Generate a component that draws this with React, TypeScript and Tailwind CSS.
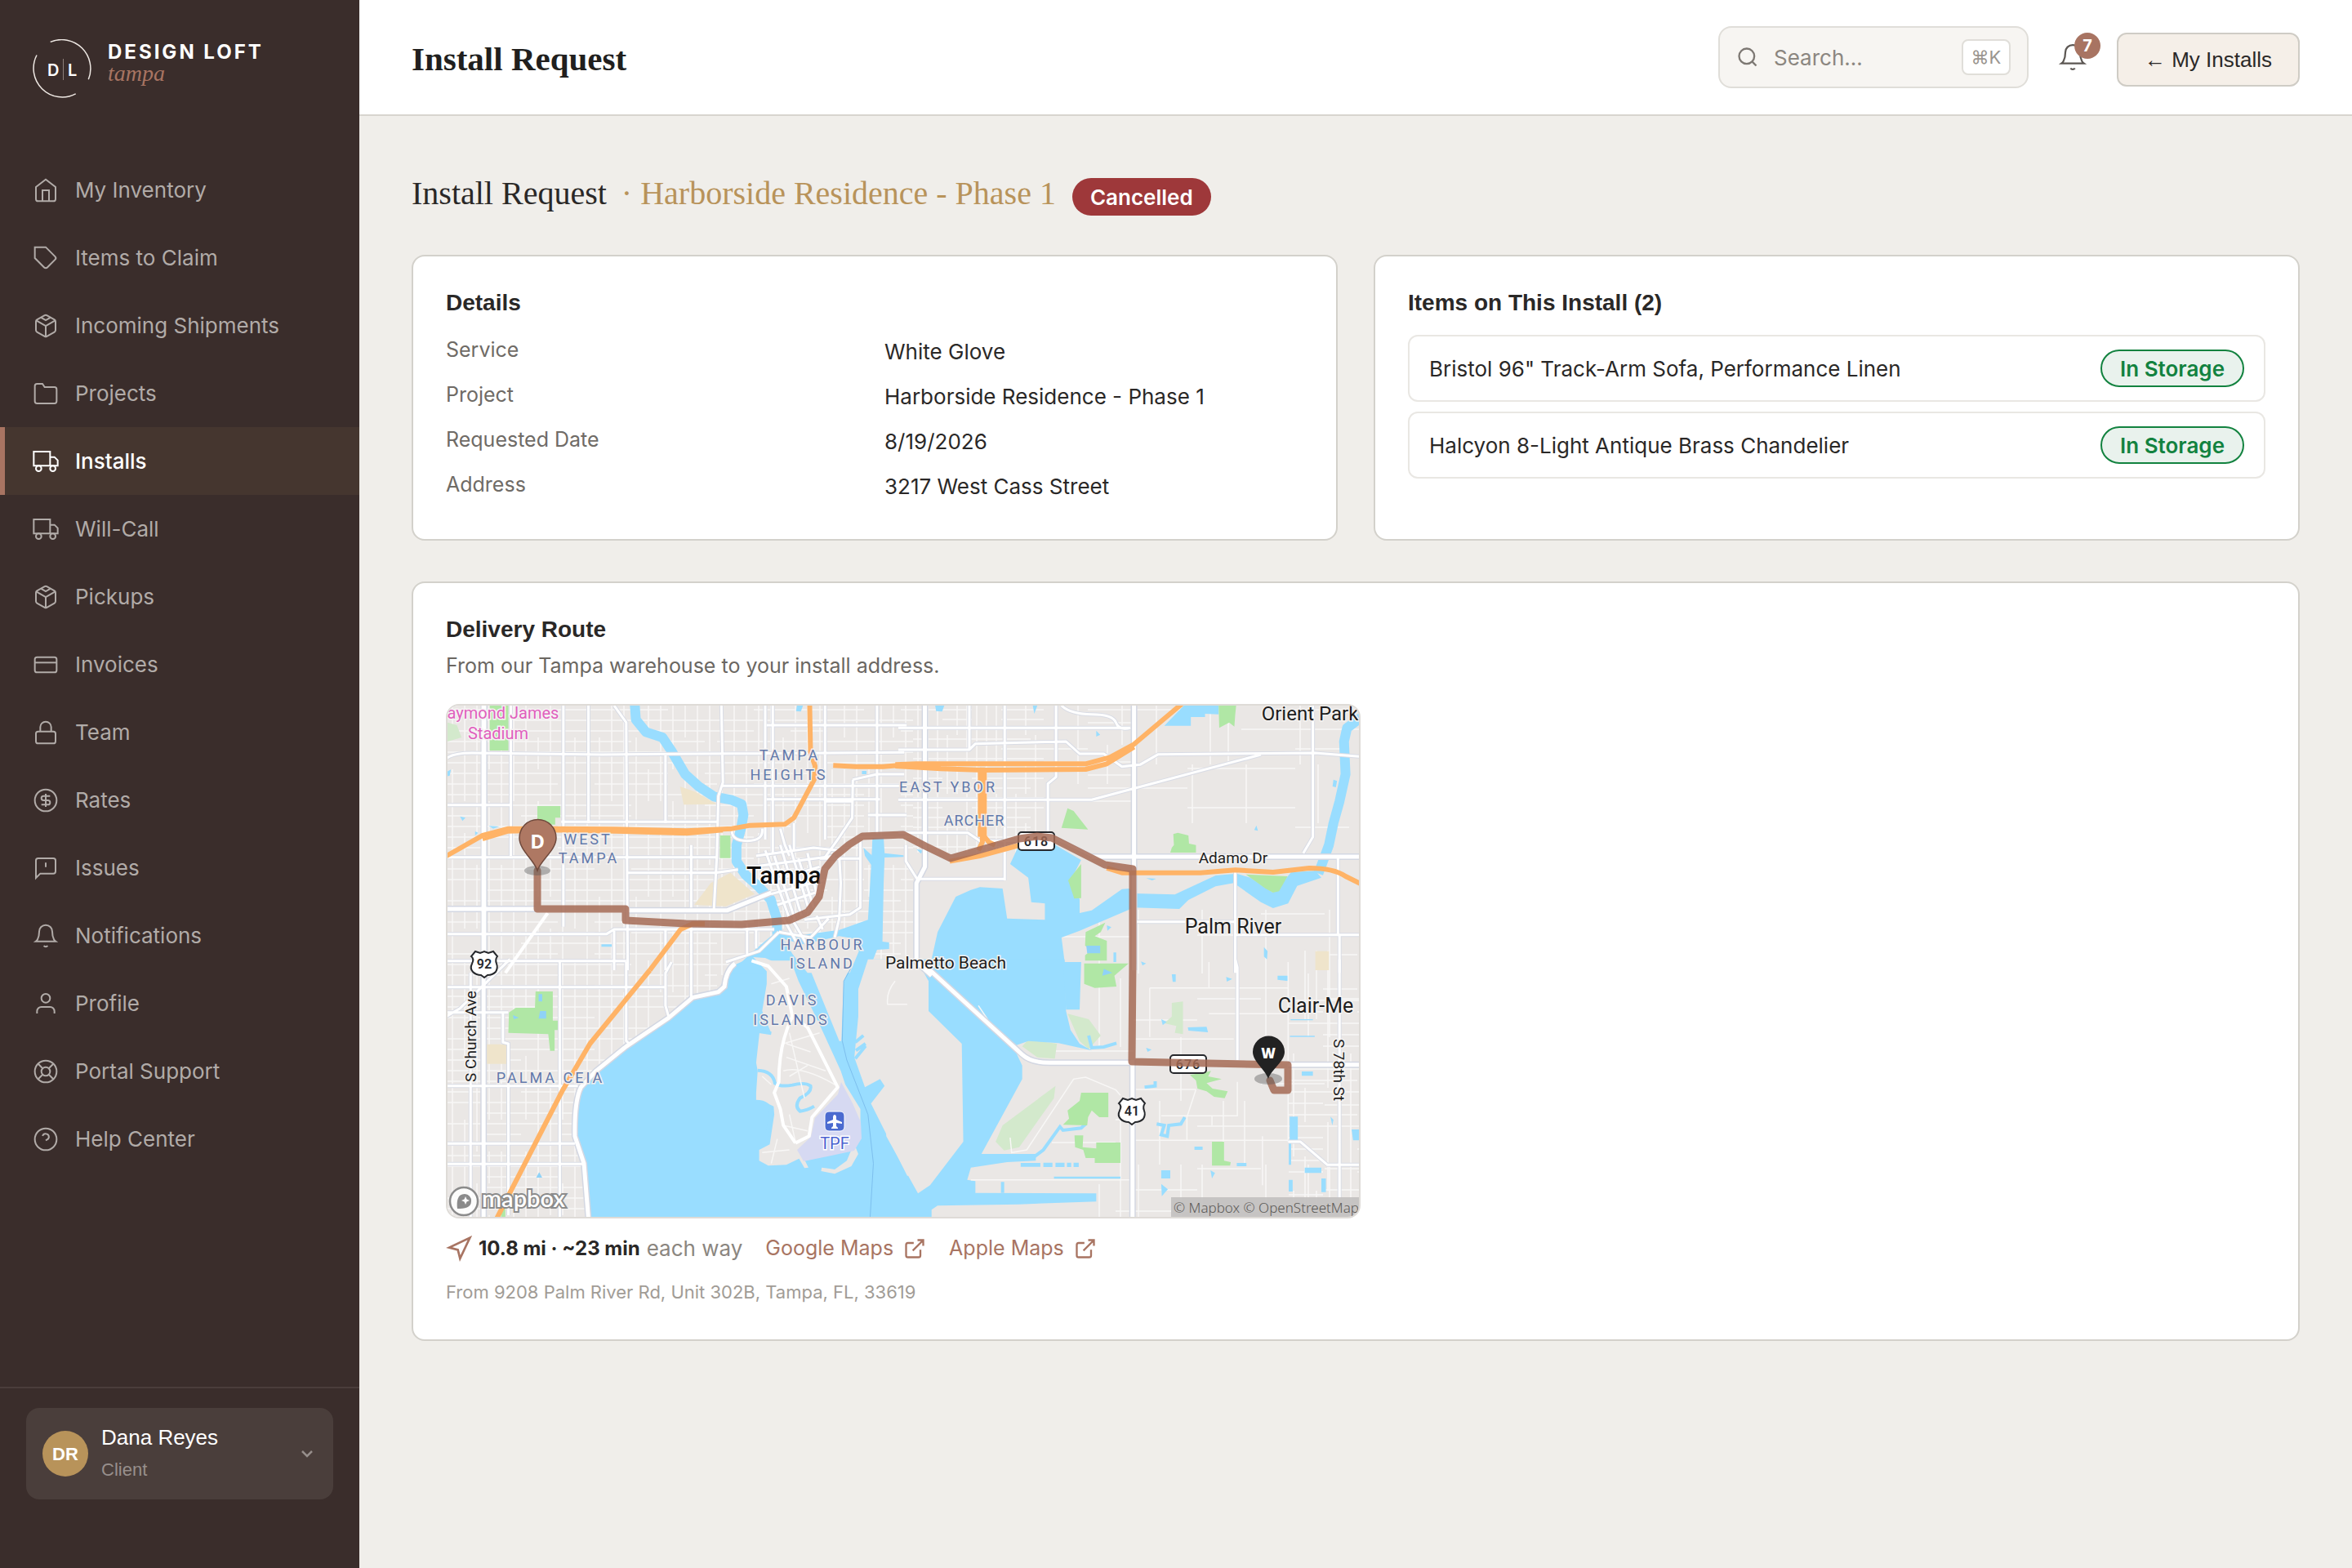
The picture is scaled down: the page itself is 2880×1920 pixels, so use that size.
import React from "react";

type IconProps = { className?: string; children: React.ReactNode };

function Icon({ className = "size-8", children }: IconProps) {
  return (
    <svg viewBox="0 0 24 24" fill="none" stroke="currentColor" strokeWidth="1.5" className={className} aria-hidden="true">
      {children}
    </svg>
  );
}

const box = (
  <>
    <path d="M21 16V8a2 2 0 0 0-1-1.73l-7-4a2 2 0 0 0-2 0l-7 4A2 2 0 0 0 3 8v8a2 2 0 0 0 1 1.73l7 4a2 2 0 0 0 2 0l7-4A2 2 0 0 0 21 16z" />
    <path d="M7.5 4.21 12 6.81l4.5-2.6M3.27 6.96 12 12.01l8.73-5.05M12 22.08V12" />
  </>
);
const truck = (
  <>
    <path d="M1 3h15v13H1zM16 8h4l3 3v5h-7z" />
    <circle cx="5.5" cy="18.5" r="2.5" />
    <circle cx="18.5" cy="18.5" r="2.5" />
  </>
);
const bell = <path d="M18 8A6 6 0 0 0 6 8c0 7-3 9-3 9h18s-3-2-3-9M13.73 21a2 2 0 0 1-3.46 0" />;

const nav: { label: string; icon: React.ReactNode; active?: boolean }[] = [
  { label: "My Inventory", icon: <path d="M3 9l9-7 9 7v11a2 2 0 0 1-2 2H5a2 2 0 0 1-2-2zM9 22V12h6v10" /> },
  { label: "Items to Claim", icon: <path d="M20.59 13.41l-7.17 7.17a2 2 0 0 1-2.83 0L2 12V2h10l8.59 8.59a2 2 0 0 1 0 2.82z" /> },
  { label: "Incoming Shipments", icon: box },
  { label: "Projects", icon: <path d="M22 19a2 2 0 0 1-2 2H4a2 2 0 0 1-2-2V5a2 2 0 0 1 2-2h5l2 3h9a2 2 0 0 1 2 2z" /> },
  { label: "Installs", icon: truck, active: true },
  { label: "Will-Call", icon: truck },
  { label: "Pickups", icon: box },
  { label: "Invoices", icon: <><rect x="2" y="5" width="20" height="14" rx="2" /><path d="M2 10h20" /></> },
  { label: "Team", icon: <><rect x="3" y="11" width="18" height="11" rx="2" /><path d="M7 11V7a5 5 0 0 1 10 0v4" /></> },
  { label: "Rates", icon: <><circle cx="12" cy="12" r="10" /><path d="M16 8h-6a2 2 0 1 0 0 4h4a2 2 0 1 1 0 4H8M12 18V6" /></> },
  { label: "Issues", icon: <path d="M21 15a2 2 0 0 1-2 2H7l-4 4V5a2 2 0 0 1 2-2h14a2 2 0 0 1 2 2zM12 7v4" /> },
  { label: "Notifications", icon: bell },
  { label: "Profile", icon: <><path d="M20 21v-2a4 4 0 0 0-4-4H8a4 4 0 0 0-4 4v2" /><circle cx="12" cy="7" r="4" /></> },
  {
    label: "Portal Support",
    icon: (
      <>
        <circle cx="12" cy="12" r="10" />
        <circle cx="12" cy="12" r="4" />
        <path d="M4.93 4.93l4.24 4.24M14.83 14.83l4.24 4.24M14.83 9.17l4.24-4.24M4.93 19.07l4.24-4.24" />
      </>
    ),
  },
  { label: "Help Center", icon: <><circle cx="12" cy="12" r="10" /><path d="M9.09 9a3 3 0 0 1 5.83 1c0 2-3 3-3 3" /></> },
];

function Sidebar() {
  return (
    <aside className="flex w-[440px] shrink-0 flex-col bg-[#3a2d2b]">
      <div className="flex gap-5 px-10 pt-12">
        <svg viewBox="0 0 72 72" fill="none" className="size-[72px]" role="img" aria-label="DL">
          <path d="M21.7 3.4A35.4 35.4 0 0 1 68.3 49.3M52.7 66.8A35.2 35.2 0 0 1 5 19.5" stroke="#efe9e4" strokeWidth="1.5" />
          <path d="M37.5 24v26" stroke="#8d7f7a" strokeWidth="1" />
          <text x="18" y="45" fontSize="20" fontWeight="600" fill="#fff" fontFamily="Inter, sans-serif">D</text>
          <text x="43" y="45" fontSize="20" fontWeight="600" fill="#fff" fontFamily="Inter, sans-serif">L</text>
        </svg>
        <div className="flex flex-col">
          <span className="text-2xl font-bold tracking-[3px] text-white">DESIGN LOFT</span>
          <span className="font-['Liberation_Serif',serif] text-[28px] leading-5 text-[#a87462] italic">tampa</span>
        </div>
      </div>
      <nav className="mt-[71px] flex flex-col">
        {nav.map((n) => (
          <a
            key={n.label}
            href="#"
            aria-current={n.active ? "page" : undefined}
            className={
              n.active
                ? "flex h-[83px] items-center gap-5 border-l-6 border-[#a87462] bg-[#45362f] pl-[34px] text-[26px] font-medium text-white"
                : "flex h-[83px] items-center gap-5 border-l-6 border-transparent pl-[34px] text-[26px] text-[#b1aba8]"
            }
          >
            <Icon>{n.icon}</Icon>
            {n.label}
          </a>
        ))}
      </nav>
      <div className="mt-auto border-t-2 border-[#4a3d3b] px-8 pt-6 pb-[84px] font-['Liberation_Sans',sans-serif]">
        <button className="flex h-28 w-full items-center gap-4 rounded-2xl bg-[#4a3e3b] px-5 text-left">
          <span className="flex size-14 items-center justify-center rounded-full bg-[#b8935a] text-[22px] font-bold text-white">DR</span>
          <span className="flex flex-1 flex-col gap-1">
            <span className="text-[26px] leading-9 text-white">Dana Reyes</span>
            <span className="text-[22px] leading-9 text-[#978f8c]">Client</span>
          </span>
          <svg viewBox="0 0 24 24" fill="none" stroke="#978f8c" strokeWidth="2.5" className="size-6" aria-hidden="true">
            <path d="m6 9 6 6 6-6" />
          </svg>
        </button>
      </div>
    </aside>
  );
}

function Header() {
  return (
    <header className="flex h-[142px] items-center gap-8 border-b-2 border-[#d8d5cf] bg-white px-16">
      <h1 className="flex-1 pt-1 font-['Liberation_Serif',serif] text-[41px] leading-[50px] font-bold text-[#211f1e]">Install Request</h1>
      <label className="flex h-[76px] w-[380px] items-center gap-[18px] rounded-2xl border-2 border-[#e0ded9] bg-[#f7f5f2] px-5">
        <svg viewBox="0 0 24 24" fill="none" stroke="#7d7873" strokeWidth="2" className="size-7 shrink-0" aria-hidden="true">
          <circle cx="11" cy="11" r="8" />
          <path d="m21 21-4.35-4.35" />
        </svg>
        <input aria-label="Search" placeholder="Search…" className="min-w-0 flex-1 bg-transparent text-[26px] outline-none placeholder:text-[#8b8680]" />
        <kbd className="flex h-11 w-[60px] items-center justify-center rounded-lg border-2 border-[#e0ded9] bg-white font-['Inter','DejaVu_Sans',sans-serif] text-[22px] text-[#9a958f]">
          ⌘K
        </kbd>
      </label>
      <button aria-label="Notifications, 7 unread" className="relative mx-1 text-[#5c5753]">
        <Icon className="size-9">{bell}</Icon>
        <span className="absolute -top-3 left-5 flex size-8 items-center justify-center rounded-full bg-[#a87462] text-xl font-bold text-white">7</span>
      </button>
      <button className="mt-1.5 h-[66px] w-[224px] rounded-xl border-2 border-[#cfccc5] bg-[#f5efe8] font-['Liberation_Sans',sans-serif] text-[26px] text-[#2a2827]">
        ← My Installs
      </button>
    </header>
  );
}

const details = [
  ["Service", "White Glove"],
  ["Project", "Harborside Residence - Phase 1"],
  ["Requested Date", "8/19/2026"],
  ["Address", "3217 West Cass Street"],
];

const items = ['Bristol 96" Track-Arm Sofa, Performance Linen', "Halcyon 8-Light Antique Brass Chandelier"];

function Card({ children }: { children: React.ReactNode }) {
  return <section className="rounded-2xl border-2 border-[#d3d1cb] bg-white px-10 pt-9">{children}</section>;
}

function CardTitle({ children }: { children: React.ReactNode }) {
  return <h3 className="font-['Liberation_Sans',sans-serif] text-[28px] leading-[42px] font-bold text-[#2a2827]">{children}</h3>;
}

/* ---------- Map ---------- */

type Tile = "nw" | "ne" | "sw" | "se";
const origin: Record<Tile, string> = {
  nw: "translate(-18 -16) scale(.37 .3333)",
  ne: "translate(552 -16) scale(.37 .3333)",
  sw: "translate(-18 314) scale(.37 .3333)",
  se: "translate(552 314) scale(.37 .3333)",
};
type Shape = [Tile, string];

function Shapes({ list, ...rest }: { list: Shape[] } & React.SVGProps<SVGPathElement>) {
  return (
    <>
      {list.map(([t, d], i) => (
        <path key={i} d={d} transform={origin[t]} vectorEffect="non-scaling-stroke" {...rest} />
      ))}
    </>
  );
}

/* Local streets: a seeded block generator, [x, y, width, height, block width, block height, density] */
const blocks = [
  [0, 0, 330, 626, 15, 13, 0.85],
  [330, 0, 240, 330, 15, 13, 0.75],
  [570, 0, 160, 180, 12, 12, 0.8],
  [730, 0, 110, 130, 18, 16, 0.45],
  [840, 0, 276, 150, 22, 24, 0.3],
  [840, 250, 276, 376, 26, 26, 0.28],
  [1030, 300, 86, 326, 14, 14, 0.5],
  [740, 250, 100, 376, 26, 28, 0.3],
];
function makeStreets() {
  let seed = 7;
  const rnd = () => (seed = (seed * 16807) % 2147483647) / 2147483647;
  let d = "";
  for (const [x0, y0, w, h, bw, bh, p] of blocks) {
    for (let x = x0 + 6; x < x0 + w; x += bw)
      for (let y = y0; y < y0 + h; y += bh * 3) if (rnd() < p) d += `M${x} ${y}v${Math.min(bh * 3, y0 + h - y)}`;
    for (let y = y0 + 5; y < y0 + h; y += bh)
      for (let x = x0; x < x0 + w; x += bw * 3) if (rnd() < p) d += `M${x} ${y}h${Math.min(bw * 3, x0 + w - x)}`;
  }
  return d;
}
const streets = makeStreets();

const water: Shape[] = [
  ["sw", "M520 945 500 740 475 640 475 500 520 410 640 310 780 200 860 130 945 105 970 50 1000 10 1040-10H1600V945Z"],
  ["nw", "M985 1030 1050 960 1140 875 1225 890 1345 872 1440 835 1450 650 1455 535 1492 535 1495 590 1558 598 1558 604 1495 606 1492 700 1488 915 1510 918 1510 942 1470 945 1440 1030Z"],
  ["nw", "M1425 570 1455 600V640L1430 600Z"],
  ["ne", "M100 1030 130 880 190 750 240 725 270 715 345 720 360 830 485 835 485 775 440 770 430 680 370 630 395 570 520 560 605 615 570 690 600 760 600 810 640 800 740 722 765 720 780 738 915 742 1050 672 1120 665 1165 680 1240 735 1270 700 1300 660 1380 655 1400 680 1320 710 1290 775 1240 792 1200 770 1110 700 1050 712 960 762 930 795 780 790 600 875 540 900 555 1030Z"],
  ["ne", "M880 122 945 48H1060V80L1015 78V90H968V122Z"],
  ["se", "M-10-10H550L555 180 570 250 600 300 640 325 530 298 430 290 380 310 410 380V430L275 705H455V730L360 735 240 755 228 800 255 805V848L655 850V880L400 890 130 895 110 910V945H-10Z"],
  ["se", "M545 0H605L600 175H555ZM1295 568H1322V655H1295ZM1500 615H1530V655H1505ZM1345 755H1400V775H1345ZM1400 795H1415V845H1400ZM870 765H900V795H870ZM870 815 892 835 872 860ZM1292 800H1305V843H1292ZM1292 665H1300V745H1292ZM980 678H1007V690H980ZM1335 402H1372V418H1335ZM958 240 1020 238 1025 258 960 252ZM1255 50H1290V70L1255 65ZM905 45H918V73H908ZM1085 55 1105 62 1087 72ZM870 210 888 220 875 232ZM1033 765 1048 775 1038 795ZM1120 738H1152V750H1120ZM515 788H735V796H515ZM405 738H470V752H405ZM480 737H510V753H480ZM520 737H550V753H520ZM558 737H572V753H558ZM580 737H597V753H580ZM1298 210H1372V214H1298ZM1296 271H1378V275H1296ZM1430 568 1440 580 1436 600ZM820 315 838 322 825 330ZM10 288H48V300H10Z"],
  ["ne", "M655 140 668 155 655 162ZM122 48H152L145 70 125 68ZM445 48H460L450 78ZM1440 320 1452 325 1448 348 1437 345ZM1185 488 1190 508 1178 505ZM60 575 82 580 75 592ZM1210 935 1222 950 1220 980 1210 970ZM820 682 853 684 840 690ZM803 988 820 995 808 1003ZM690 855 705 862 692 875ZM712 955H721V990H712Z"],
  ["nw", "M1205 48H1225L1218 70 1202 68ZM90 455 108 460 98 472ZM48 290 60 283 56 305 48 308ZM185 490 220 492 200 500ZM140 510 150 515 140 525ZM558 925H592V934H558ZM1420 288H1435V300H1420ZM1340 958 1362 955 1360 968 1340 968ZM1465 990 1490 983V1003Z"],
];

const islands: Shape[] = [
  ["nw", "M1060 972 1100 975 1150 1000 1195 1030H1110Z"],
  ["nw", "M1160 905 1225 925 1345 895 1400 905 1410 950 1380 1030H1240L1190 960Z"],
  ["sw", "M1235-10 1345 290H1352L1360 70 1392-10Z"],
  ["sw", "M1105-5H1185L1210 70 1280 230 1350 400 1365 450 1415 540V600L1392 660 1408 705 1385 750 1330 778 1285 768 1287 755 1330 762 1370 730 1385 690 1300 705 1225 715 1243 755 1230 757 1212 722 1170 745 1110 748 1080 730 1080 690 1115 670 1130 560 1128 530 1100 515 1070 512V480L1075 400 1070 370 1082 250 1120 262 1090 180 1105 80Z"],
  ["sw", "M1440-10 1408 100V200L1395 350 1430 460 1480 430 1495 455 1450 520 1570 785H1620V-10Z"],
  ["se", "M-40-10H60L100 70V180L210 300 215 660 105 820 65 850-40 640Z"],
];

const inlets: Shape[] = [
  ["sw", "M1075 398Q1125 400 1132 445 1150 460 1190 452 1230 440 1250 455 1255 480 1215 500 1195 530 1215 548 1240 545 1262 530M1068 512Q1120 512 1118 560L1105 640M1080 255 1120 262"],
  ["se", "M450 715 480 690 535 605 545 618 605 610 620 595M630 270 640 315 680 312 722 298M815 460 850 455V438M855 595 880 600 870 635 890 640 895 600 935 595 948 570M345 808V848"],
  ["sw", "M1398 295 1425 270M1400 325 1432 300M1398 355 1432 308"],
];

const rivers: Shape[] = [
  ["nw", "M668 40 672 100 705 145 760 165 790 215 835 300 880 345 930 382 990 395 1022 410 1028 450 1020 500 1005 560 1005 620 1035 670 1080 715 1118 760 1138 830 1140 890"],
  ["ne", "M1540 85 1485 130 1475 180 1480 300 1460 400 1440 480 1425 560 1402 630 1390 665"],
];

const parks: Shape[] = [
  ["nw", "M188 48H250V213H188ZM346 417H422V460H405V485H380L346 470ZM950 525H985V608H950Z"],
  ["ne", "M1060 48H1118L1115 80 1112 125 1095 110 1062 130ZM560 425 580 435 628 503 540 497ZM910 520 925 515 960 525 962 555 985 560V588H900L905 570 912 560ZM605 630V755L582 757 562 690ZM1150 668 1288 675 1260 730 1240 735 1215 720ZM620 880 685 845 670 880 650 895 690 912V985H618V965L640 945 618 930Z"],
  ["se", "M615 5H762L715 50 722 90 650 95 615 80ZM605 480H695V570H665L640 545 628 570 625 600 545 598 565 575 560 545 600 510ZM583 637H612L610 680 655 685V663H735V738H650V720H620L612 690 585 680ZM1038 660H1078V730L1100 735 1098 748H1038ZM965 415 1015 405 1035 400 1025 420 1070 430 1020 445 1040 465 1090 475 1080 500 1045 495 1020 475 990 465 985 435Z"],
  ["sw", "M340 108H397V215H415V250H403V326H388L382 265 250 260 252 185 275 168 338 168ZM228 900H240V940H225Z"],
];
const paleParks: Shape[] = [
  ["se", "M520 455 515 500 400 680 350 692 322 660 345 600ZM430 285 525 300 518 355 460 350 410 310ZM905 150 942 145V265L915 260 920 235 880 225 905 200ZM560 190 630 210 670 270 630 320 600 290Z"],
  ["nw", "M48 110 80 120 95 165 48 180Z"],
];
const sand: Shape[] = [
  ["nw", "M818 345 870 365 940 410 830 412ZM865 780 920 700 985 662 1065 740 970 785Z"],
  ["sw", "M175 302H243V374H175Z"],
  ["ne", "M1380 950H1425V1020H1380Z"],
];

const roads: Shape[] = [
  ["nw", "M48 240Q70 222 130 222L560 228 775 226 1560 220M432 48V860M515 48V480M600 48 640 110 645 1020M770 230V480M48 413H258M48 605H940M640 662H935L1010 650M165 48V1030M258 48V600M425 475H945M855 560V790M905 48M955 48 960 330 945 380 940 600 935 700 930 800M955 343H1568M1100 48V540M1125 48V590M1298 48V540M1105 120H1568M1105 392H1480M1470 48V520M48 887H575L600 870 1130 870M48 986H640M640 840M600 875V1020M770 870V1020M855 860V1020M1040 850V960M1070 870V940M1440 450H1568M1390 320 1388 460 1340 540 1295 610M1345 600 1350 700 1345 830 1330 900M1280 610H1415M1415 545V790L1380 815 1230 835M970 990 1080 950 1145 880M1145 880 1250 900 1310 830M990 500Q985 545 1040 545T1090 500M1390 320 1470 300 1560 300M1300 400H1390"],
  ["nw", "M1070 600 1260 570 1340 580M1060 640 1330 600M1100 700 1280 640M1120 740 1290 690M1140 780 1280 730M1100 580 1180 830M1150 560 1220 820M1180 560 1245 800M1130 600 1200 840M1210 610 1260 790M1240 590 1270 740M1150 500 1165 560 1180 600M1195 480V580M1160 830 1210 930M1190 835 1240 930M1270 820 1290 870"],
  ["ne", "M0 130H768M0 210H235L255 188 555 180 600 225H680L740 272 800 265 860 227 1380 222 1525 235M0 394H640L1200 228M235 48V210M352 48V690M522 48V310L495 335V510M540 48Q570 80 640 80T720 110 768 130M1372 48V530L1340 590M0 515H230L270 545H390M520 535 640 600M65 685H270L290 685H350M25 560V620L65 690M1115 650V1030M790 842H1115M1115 890H1525M1455 600V890M1460 890V1030"],
  ["sw", "M48 92H770M48 185H250M232 185V295L250 300V930M125 40V936M420 0V936M640 0V290L650 300M790 0 770 40V160L780 200M855 0V130M48 455H480M48 667H470M48 742H500M0 230 90 170 255-10"],
  ["se", "M790-10M1115-10 1122 20V360M1460-10V870M1290 660H1330L1420 745H1525"],
];
const arterials: Shape[] = [
  ["nw", "M170 48V1040M48 795H340M640 800 975 800 1120 735"],
  ["sw", "M168-10V936M1000 5Q970 30 965 90L945 110 860 130 780 205 640 310 540 400 490 460Q468 510 470 640L500 740 515 945"],
  ["ne", "M780 48V1020M640 603H1525M88 48V640L60 700V990L110 1040"],
  ["se", "M90 15 410 340Q440 370 500 370H770M1290 377H1525M775 360V945"],
];
const islandRoads: Shape[] = [
  ["nw", "M240 1030 380 810"],
  ["sw", "M1055-5 1110 15 1170 90 1190 200 1240 240 1340 460 1255 570 1245 640 1200 665M1190 200Q1145 300 1145 440L1130 480 1150 540 1160 600 1200 665"],
];
const faint: Shape[] = [
  ["se", "M370 645 375 700 425 690 580 430 620 423 720 470 735 490M785 655H1290M955 570V655M785 468H985M1122 440V565H870M1038 565V600M1205 640V820M240 800H770M832 95V275M832 95H1290M1028 0V95M1028 190H1290M785 283H1110M985 468 955 570M1290 0V660M265 160 295 210"],
  ["sw", "M1530 70Q1500 110 1505 155H1570M1090 420 1120 450M1160 300 1280 260M1170 350 1300 400M1180 420 1240 380M1120 80 1180 60M1110 150 1170 140M1160 400Q1220 380 1330 450M1160 600 1240 620M1180 560 1200 660M1090 700 1180 690M1140 650 1120 740M1170 300 1250 330M1180 260 1230 500"],
];
const highways: Shape[] = [
  ["nw", "M30 610 165 525 250 500 400 500 600 502 840 508 990 500 1050 488 1165 484 1195 460 1262 320 1265 270 1250 220 1247 40"],
  ["sw", "M718 30 520 300 430 470 210 945"],
  ["nw", "M718 1020 820 870 860 850 900 850"],
  ["nw", "M1325 268 1400 272 1490 272 1570 265"],
  ["ne", "M-10 265 60 262 620 262 700 238 780 190 940 40M-10 270 140 280 280 285 620 282 690 262 780 200M278 275V550L265 580M278 520 300 550 320 560M170 620 270 600 420 555M690 645 740 662H1000L1115 652 1240 660 1360 645Q1440 645 1480 675L1535 705"],
];

const route =
  "M110 202V249H218V263L292 267 360 268 418 263 441 253 455 234 462 200 475 184 492 170 508 160 558 158 585 172 616 187 700 163 722 160 740 162 805 195 839 200 839 316 838 436 1029 440V471H1012L1007 459";

function Area({ x, y, children }: { x: number; y: number; children: string }) {
  return (
    <text x={x} y={y} fontSize="18" letterSpacing="3" fill="#6279ab" stroke="#f1eeec" strokeWidth="3" paintOrder="stroke" textAnchor="middle">
      {children}
    </text>
  );
}
function Place({ x, y, size = 21, rotate = 0, children }: { x: number; y: number; size?: number; rotate?: number; children: string }) {
  return (
    <text x={x} y={y} transform={`rotate(${rotate} ${x} ${y})`} fontSize={size} fill="#1d1d1d" stroke="#f4f2f0" strokeWidth="3" paintOrder="stroke" textAnchor="middle">
      {children}
    </text>
  );
}
function UsShield({ x, y, n }: { x: number; y: number; n: string }) {
  return (
    <g transform={`translate(${x} ${y})`}>
      <path d="M-11-15-5-13 0-15 5-13 11-15 16-9Q13-5 15 0T14 10Q10 14 4 14L0 17-4 14Q-10 14-14 10T-15 0-16-9Z" fill="#fff" stroke="#26282c" strokeWidth="2" />
      <text y="6" fontSize="16" fontWeight="600" fill="#26282c" textAnchor="middle">{n}</text>
    </g>
  );
}
function StateShield({ x, y, n }: { x: number; y: number; n: string }) {
  return (
    <g transform={`translate(${x} ${y})`}>
      <rect x="-22" y="-11" width="44" height="22" rx="4" fill="#fff" stroke="#26282c" strokeWidth="2" />
      <text y="6" fontSize="16" fontWeight="600" letterSpacing="1" fill="#26282c" textAnchor="middle">{n}</text>
    </g>
  );
}

function RouteMap() {
  return (
    <svg viewBox="0 0 1116 626" className="block w-full" fontFamily="Roboto, sans-serif" role="img" aria-label="Delivery route from the Tampa warehouse to the install address">
      <rect width="1116" height="626" fill="#eae7e5" />
      <path d={streets} fill="none" stroke="#f8f7f6" strokeWidth="1.5" />
      <Shapes list={paleParks} fill="#d3e9cc" />
      <Shapes list={sand} fill="#efe4cb" />
      <Shapes list={water} fill="#99ddff" />
      <Shapes list={islands} fill="#eae7e5" />
      <path d="M482 461 496 487 506 510 507 530 498 545 470 551 436 558 428 544 445 528 450 505 478 476Z" fill="#d6d9f2" />
      <Shapes list={inlets} fill="none" stroke="#99ddff" strokeWidth="4" />
      <Shapes list={rivers} fill="none" stroke="#99ddff" strokeWidth="12" strokeLinejoin="round" />
      <Shapes list={[["sw", "M1355 290 1370 360 1440 560 1458 740 1447 940M1355 290 1360 70 1385 20"]]} fill="none" stroke="#7dbfee" strokeWidth="1" />
      <Shapes list={parks} fill="#b0e7a5" />
      <Shapes list={[["sw", "M350 118H362V145H350ZM355 180H375V208H350ZM265 195 285 205 268 210ZM342 792 352 772 362 792Z"], ["ne", "M622 930H668V958H625Z"], ["se", "M680 25 708 40 675 50Z"]]} fill="#8fd2f7" />
      <Shapes list={faint} fill="none" stroke="#f8f7f6" strokeWidth="1.5" />
      <Shapes list={roads} fill="none" stroke="#d9dce5" strokeWidth="5" />
      <Shapes list={arterials} fill="none" stroke="#d3d7e2" strokeWidth="8" />
      <Shapes list={roads} fill="none" stroke="#fff" strokeWidth="3" strokeLinejoin="round" />
      <Shapes list={islandRoads} fill="none" stroke="#fff" strokeWidth="4" strokeLinejoin="round" />
      <Shapes list={arterials} fill="none" stroke="#fff" strokeWidth="5" strokeLinejoin="round" />
      <Shapes list={highways} fill="none" stroke="#ffb366" strokeWidth="6" strokeLinejoin="round" />
      <Shapes list={[["nw", "M165 540 250 512 400 508 600 512 840 520 960 508"]]} fill="none" stroke="#ffb366" strokeWidth="4" />
      <Shapes list={[["ne", "M278 285V530"]]} fill="none" stroke="#ffb366" strokeWidth="11" />

      <g fill="#e05fbd" stroke="#f6f2f3" strokeWidth="3" paintOrder="stroke" fontSize="20" textAnchor="middle">
        <text x="68" y="16">aymond James</text>
        <text x="62" y="41">Stadium</text>
      </g>
      <Area x={419} y={67}>TAMPA</Area>
      <Area x={418} y={91}>HEIGHTS</Area>
      <Area x={613} y={106}>EAST YBOR</Area>
      <text x="645" y="147" fontSize="18" letterSpacing="1" fill="#6279ab" stroke="#f1eeec" strokeWidth="3" paintOrder="stroke" textAnchor="middle">ARCHER</text>
      <Area x={172} y={170}>WEST</Area>
      <Area x={173} y={193}>TAMPA</Area>
      <Area x={459} y={299}>HARBOUR</Area>
      <Area x={459} y={322}>ISLAND</Area>
      <Area x={422} y={367}>DAVIS</Area>
      <Area x={421} y={391}>ISLANDS</Area>
      <Area x={126} y={462}>PALMA CEIA</Area>
      <text x="366" y="218" fontSize="30" fontWeight="500" fill="#0d0d0d" stroke="#fff" strokeWidth="3" paintOrder="stroke">Tampa</text>
      <Place x={610} y={322}>Palmetto Beach</Place>
      <Place x={1056} y={18} size={24}>Orient Park</Place>
      <Place x={962} y={193} size={19}>Adamo Dr</Place>
      <Place x={962} y={279} size={25}>Palm River</Place>
      <Place x={1063} y={376} size={25}>Clair-Me</Place>
      <Place x={35} y={405} size={19} rotate={-90}>S Church Ave</Place>
      <Place x={1085} y={446} size={19} rotate={90}>S 78th St</Place>
      <UsShield x={45} y={316} n="92" />
      <UsShield x={838} y={496} n="41" />
      <StateShield x={721} y={166} n="618" />
      <StateShield x={907} y={439} n="676" />
      <rect x="462" y="497" width="24" height="24" rx="5" fill="#4b6bd0" stroke="#fff" strokeWidth="1" />
      <path d="M474 501c1 0 2 1 2 3v3l7 3v2l-7-1v4l2 2v1h-8v-1l2-2v-4l-7 1v-2l7-3v-3c0-2 1-3 2-3z" fill="#fff" />
      <text x="474" y="543" fontSize="20" fill="#4b62d0" stroke="#fff" strokeWidth="3" paintOrder="stroke" textAnchor="middle">TPF</text>

      <path d={route} fill="none" stroke="#a46a55" strokeOpacity=".85" strokeWidth="9" strokeLinejoin="round" strokeLinecap="round" />

      <g transform="translate(110 202)">
        <ellipse cx="0" cy="0" rx="16" ry="6" fill="#555" fillOpacity=".4" />
        <path d="M0 0C-4-13-22-25-22-40A22.5 22.5 0 0 1 23-40C23-25 4-13 0 0Z" fill="#ae7863" stroke="#6f493c" strokeWidth="1.5" />
        <text y="-27" fontSize="24" fontWeight="700" fill="#fff" textAnchor="middle" fontFamily="'Open Sans', sans-serif">D</text>
      </g>
      <g transform="translate(1005 457)">
        <ellipse cx="0" cy="0" rx="17" ry="7" fill="#555" fillOpacity=".4" />
        <path d="M0 0C-4-12-19-21-19-33A19.5 19.5 0 0 1 20-33C20-21 4-12 0 0Z" fill="#222" />
        <text y="-25" fontSize="17" fontWeight="800" fill="#fff" textAnchor="middle" fontFamily="'Open Sans', sans-serif">W</text>
      </g>

      <g transform="translate(20 607)">
        <circle r="17" fill="#fff" fillOpacity=".85" stroke="#8b8b8b" strokeWidth="2.5" />
        <path d="M-8 9C-9 0-8-9 1-9A8 8 0 0 1 9 0C9 8 1 9-8 9Z" fill="#8b8b8b" />
        <path d="m2-6 1.5 3.5L7-1 3.5.5 2 4 .5.5-3-1 .5-2.5Z" fill="#fff" />
      </g>
      <text x="42" y="614" fontSize="29" fontWeight="600" fill="#fff" stroke="#8b8b8b" strokeWidth="4" paintOrder="stroke" fontFamily="Lato, sans-serif">mapbox</text>
      <rect x="886" y="602" width="230" height="24" fill="#c2c0bf" fillOpacity=".9" />
      <text x="889" y="621" fontSize="17" fill="#5b5957" fontFamily="'Noto Sans', sans-serif" fontWeight="300">© Mapbox © OpenStreetMap</text>
    </svg>
  );
}

function MapLink({ children }: { children: string }) {
  return (
    <a href="#" className="flex items-center gap-3 text-[25px] text-[#a87462]">
      {children}
      <svg viewBox="0 0 24 24" fill="none" stroke="currentColor" strokeWidth="2" className="size-7" aria-hidden="true">
        <path d="M18 13v6a2 2 0 0 1-2 2H5a2 2 0 0 1-2-2V8a2 2 0 0 1 2-2h6M15 3h6v6M10 14 21 3" />
      </svg>
    </a>
  );
}

export default function App() {
  return (
    <div className="flex min-h-screen bg-[#f0eeea] font-[Inter,sans-serif] text-[#2a2827]">
      <Sidebar />
      <div className="flex min-w-0 flex-1 flex-col">
        <Header />
        <main className="flex flex-col px-16 pt-[68px]">
          <div className="flex items-center">
            <h2 className="flex gap-[18px] font-['Liberation_Serif',serif] text-[40px] leading-[52px]">
              <span>Install Request</span>
              <span className="text-[#b8935a]">· Harborside Residence - Phase 1</span>
            </h2>
            <span className="mt-2 ml-5 flex h-[46px] items-center rounded-full bg-[#9e383a] px-[22px] text-[26px] font-semibold text-white">Cancelled</span>
          </div>
          <div className="mt-12 grid min-h-[350px] grid-cols-2 gap-11">
            <Card>
              <CardTitle>Details</CardTitle>
              <dl className="mt-[18px] grid grid-cols-2 gap-x-6 gap-y-[13px]">
                {details.map(([k, v]) => (
                  <React.Fragment key={k}>
                    <dt className="text-[25px] leading-9 text-[#6f6b66]">{k}</dt>
                    <dd className="text-[26px] leading-[42px]">{v}</dd>
                  </React.Fragment>
                ))}
              </dl>
            </Card>
            <Card>
              <CardTitle>Items on This Install (2)</CardTitle>
              <ul className="mt-[18px] flex flex-col gap-3">
                {items.map((t) => (
                  <li key={t} className="flex h-[82px] items-center justify-between rounded-xl border-2 border-[#e9e7e3] px-6 text-[26px]">
                    {t}
                    <span className="flex h-[46px] items-center rounded-full border-2 border-[#12823f] bg-[#e9f2ed] px-[22px] text-[26px] font-semibold text-[#12823f]">In Storage</span>
                  </li>
                ))}
              </ul>
            </Card>
          </div>
          <div className="mt-[50px]">
            <Card>
              <CardTitle>Delivery Route</CardTitle>
              <p className="mt-1 text-[25px] leading-[38px] text-[#6b6762]">From our Tampa warehouse to your install address.</p>
              <div className="mt-7 max-w-[1120px] overflow-hidden rounded-2xl border-2 border-[#dedbd7]">
                <RouteMap />
              </div>
              <div className="mt-4 flex items-center gap-7">
                <div className="flex items-center gap-2 text-[26px] leading-[42px]">
                  <svg viewBox="0 0 24 24" fill="none" stroke="#a87462" strokeWidth="2" className="size-8" aria-hidden="true">
                    <path d="m3 11 19-9-9 19-2-8z" />
                  </svg>
                  <strong className="text-2xl font-bold">10.8 mi · ~23 min</strong>
                  <span className="text-[#8b8680]">each way</span>
                </div>
                <MapLink>Google Maps</MapLink>
                <MapLink>Apple Maps</MapLink>
              </div>
              <p className="mt-[14px] pb-10 text-[22px] leading-[36px] text-[#a19c96]">From 9208 Palm River Rd, Unit 302B, Tampa, FL, 33619</p>
            </Card>
          </div>
        </main>
      </div>
    </div>
  );
}
